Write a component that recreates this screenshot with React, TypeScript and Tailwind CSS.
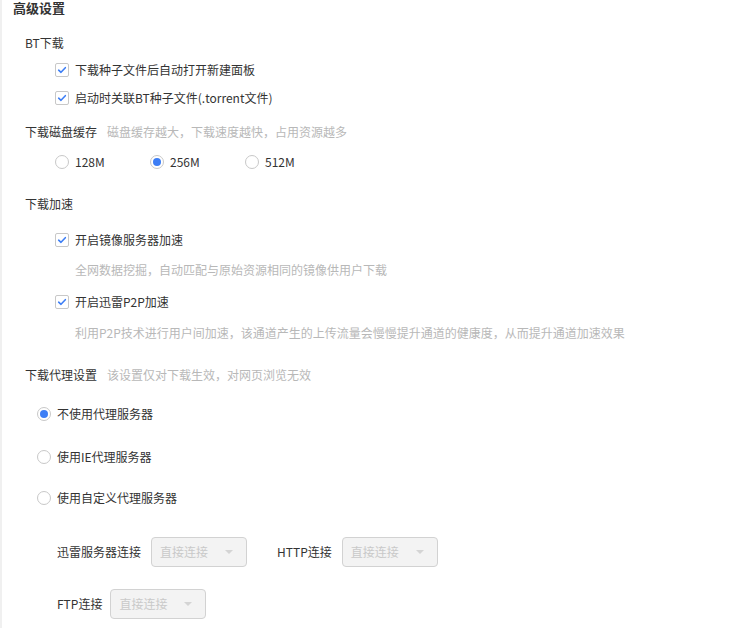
const font = { fontFamily: '"Noto Sans CJK SC", "Noto Sans", sans-serif' };

function Checkbox() {
  return (
    <span className="flex h-[14px] w-[14px] shrink-0 items-center justify-center rounded-[2px] border border-[#c8c8c8] bg-white">
      <svg viewBox="0 0 12 12" className="h-[10px] w-[10px]">
        <path d="M2 6.2 L4.8 8.8 L10 3.2" fill="none" stroke="#3d7ef5" strokeWidth="1.9" strokeLinecap="round" strokeLinejoin="round" />
      </svg>
    </span>
  );
}

function Radio({ checked }: { checked?: boolean }) {
  return (
    <span className="flex h-[14px] w-[14px] shrink-0 items-center justify-center rounded-full border border-[#c8c8c8] bg-white">
      {checked && <span className="h-[8px] w-[8px] rounded-full bg-[#3d7ef5]" />}
    </span>
  );
}

function Select() {
  return (
    <div className="flex h-[30px] w-[96px] items-center justify-between rounded-[4px] border border-[#d2d2d2] bg-[#f3f3f3] pl-[8px] pr-[13px] text-[#c9c9c9]">
      <span>直接连接</span>
      <span className="h-0 w-0 border-x-[4px] border-t-[4px] border-x-transparent border-t-[#d4d4d4]" />
    </div>
  );
}

export default function App() {
  return (
    <div className="min-h-screen border-l-2 border-[#f0f0f0] bg-white text-[12px] leading-[20px] text-[#333]" style={font}>
      <div className="flex flex-col">
        <div className="ml-[11px] flex h-[16px] items-center text-[13px] font-bold leading-[16px]">高级设置</div>

        <div className="ml-[23px] mt-[17px] flex h-[20px] items-center">BT下载</div>
        <div className="ml-[53px] mt-[7px] flex h-[20px] items-center gap-[6px]">
          <Checkbox />
          <span>下载种子文件后自动打开新建面板</span>
        </div>
        <div className="ml-[53px] mt-[8px] flex h-[20px] items-center gap-[6px]">
          <Checkbox />
          <span>启动时关联BT种子文件(.torrent文件)</span>
        </div>

        <div className="ml-[23px] mt-[14px] flex h-[20px] items-center gap-[10px]">
          <span>下载磁盘缓存</span>
          <span className="text-[#b8b8b8]">磁盘缓存越大，下载速度越快，占用资源越多</span>
        </div>
        <div className="ml-[53px] mt-[10px] flex h-[20px] items-center">
          {["128M", "256M", "512M"].map((v) => (
            <div key={v} className="flex w-[95px] items-center gap-[6px]">
              <Radio checked={v === "256M"} />
              <span>{v}</span>
            </div>
          ))}
        </div>

        <div className="ml-[23px] mt-[22px] flex h-[20px] items-center">下载加速</div>
        <div className="ml-[53px] mt-[16px] flex h-[20px] items-center gap-[6px]">
          <Checkbox />
          <span>开启镜像服务器加速</span>
        </div>
        <div className="ml-[73px] mt-[10px] flex h-[20px] items-center text-[#b8b8b8]">
          全网数据挖掘，自动匹配与原始资源相同的镜像供用户下载
        </div>
        <div className="ml-[53px] mt-[12px] flex h-[20px] items-center gap-[6px]">
          <Checkbox />
          <span>开启迅雷P2P加速</span>
        </div>
        <div className="ml-[73px] mt-[11px] flex h-[20px] items-center text-[#b8b8b8]">
          利用P2P技术进行用户间加速，该通道产生的上传流量会慢慢提升通道的健康度，从而提升通道加速效果
        </div>

        <div className="ml-[23px] mt-[22px] flex h-[20px] items-center gap-[10px]">
          <span>下载代理设置</span>
          <span className="text-[#b8b8b8]">该设置仅对下载生效，对网页浏览无效</span>
        </div>
        <div className="ml-[35px] mt-[19px] flex h-[20px] items-center gap-[6px]">
          <Radio checked />
          <span>不使用代理服务器</span>
        </div>
        <div className="ml-[35px] mt-[23px] flex h-[20px] items-center gap-[6px]">
          <Radio />
          <span>使用IE代理服务器</span>
        </div>
        <div className="ml-[35px] mt-[21px] flex h-[20px] items-center gap-[6px]">
          <Radio />
          <span>使用自定义代理服务器</span>
        </div>

        <div className="ml-[55px] mt-[29px] flex h-[30px] items-center">
          <span>迅雷服务器连接</span>
          <div className="ml-[10px]">
            <Select />
          </div>
          <span className="ml-[30px]">HTTP连接</span>
          <div className="ml-[10px]">
            <Select />
          </div>
        </div>
        <div className="ml-[55px] mt-[22px] flex h-[30px] items-center">
          <span>FTP连接</span>
          <div className="ml-[8px]">
            <Select />
          </div>
        </div>
      </div>
    </div>
  );
}
